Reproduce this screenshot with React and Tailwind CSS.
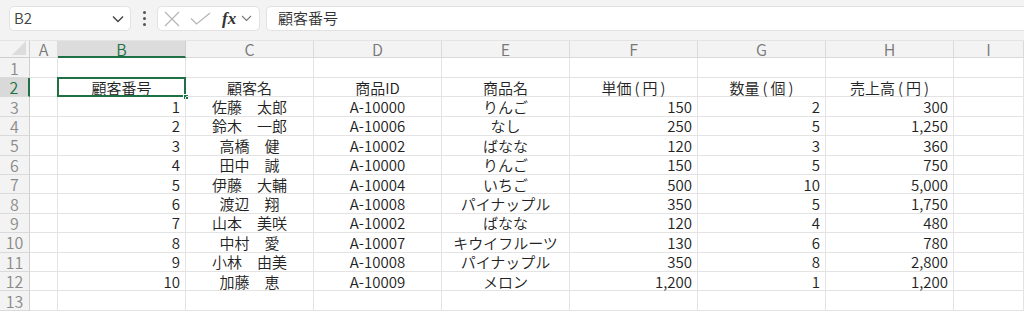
import React from 'react';

const cols = ['A', 'B', 'C', 'D', 'E', 'F', 'G', 'H', 'I'];

const paren = (a, b) => (
  <>
    {a}
    <span className="mx-[3px]">(</span>
    {b}
    <span className="ml-[3px]">)</span>
  </>
);

const header = ['', '顧客番号', '顧客名', '商品ID', '商品名', paren('単価', '円'), paren('数量', '個'), paren('売上高', '円'), ''];

const rows = [
  ['1', '佐藤　太郎', 'A-10000', 'りんご', '150', '2', '300'],
  ['2', '鈴木　一郎', 'A-10006', 'なし', '250', '5', '1,250'],
  ['3', '高橋　健', 'A-10002', 'ばなな', '120', '3', '360'],
  ['4', '田中　誠', 'A-10000', 'りんご', '150', '5', '750'],
  ['5', '伊藤　大輔', 'A-10004', 'いちご', '500', '10', '5,000'],
  ['6', '渡辺　翔', 'A-10008', 'パイナップル', '350', '5', '1,750'],
  ['7', '山本　美咲', 'A-10002', 'ばなな', '120', '4', '480'],
  ['8', '中村　愛', 'A-10007', 'キウイフルーツ', '130', '6', '780'],
  ['9', '小林　由美', 'A-10008', 'パイナップル', '350', '8', '2,800'],
  ['10', '加藤　恵', 'A-10009', 'メロン', '1,200', '1', '1,200'],
];

// which data columns are numbers (right aligned)
const numeric = [true, false, false, false, true, true, true];

const widths = ['w-[28px]', 'w-[128px]', 'w-[128px]', 'w-[128px]', 'w-[128px]', 'w-[128px]', 'w-[128px]', 'w-[128px]', 'flex-1'];

function Cell({ i, children, align = 'center', selected }) {
  return (
    <div
      className={`${widths[i]} shrink-0 h-full border-r border-b border-[#e3e3e3] flex items-center px-[5px] relative ${
        align === 'right' ? 'justify-end' : 'justify-center'
      }`}
    >
      <span className="whitespace-nowrap leading-none">{children}</span>
      {selected && (
        <>
          <div className="absolute -left-px -top-px -right-px -bottom-px border-2 border-[#1f7145]" />
          <div className="absolute -right-[4px] -bottom-[4px] w-[6px] h-[6px] bg-[#1f7145] border border-white" />
        </>
      )}
    </div>
  );
}

function RowHead({ n, active }) {
  return (
    <div
      className={`w-[30px] shrink-0 h-full flex items-center justify-center border-b border-[#dadada] text-[16px] leading-none ${
        active ? 'bg-[#d9d9d9] text-[#1f7145] border-r-2 border-r-[#1f7145]' : 'bg-[#f3f3f3] text-[#8a8a8a] border-r border-r-[#cfcfcf]'
      }`}
    >
      {n}
    </div>
  );
}

export default function App() {
  return (
    <div className="w-[1024px] h-[312px] overflow-hidden bg-white text-[15px] text-[#222] font-[350] font-['Noto_Sans_CJK_JP',sans-serif]">
      {/* formula bar */}
      <div className="h-[40px] bg-[#f3f3f3] flex items-start pt-[6px] pl-[9px]">
        <div className="w-[122px] h-[25px] bg-white rounded-[5px] border border-[#e2e2e2] flex items-center justify-between pl-[4px] pr-[6px] text-[#444]">
          <span className="text-[15px]">B2</span>
          <svg width="12" height="8" viewBox="0 0 12 8" fill="none" stroke="#444" strokeWidth="1.4">
            <path d="M1 1.5 L6 6.5 L11 1.5" />
          </svg>
        </div>
        <div className="w-[26px] h-[25px] flex flex-col items-center justify-center gap-[3px]">
          <span className="w-[3px] h-[3px] rounded-full bg-[#555]" />
          <span className="w-[3px] h-[3px] rounded-full bg-[#555]" />
          <span className="w-[3px] h-[3px] rounded-full bg-[#555]" />
        </div>
        <div className="w-[103px] h-[25px] bg-white rounded-[5px] border border-[#e2e2e2] flex items-center pl-[6px]">
          <svg width="16" height="16" viewBox="0 0 16 16" stroke="#b5b5b5" strokeWidth="1.2">
            <path d="M1 1 L15 15 M15 1 L1 15" />
          </svg>
          <svg width="21" height="13" viewBox="0 0 21 13" fill="none" stroke="#b5b5b5" strokeWidth="1.2" className="ml-[10px]">
            <path d="M1 6.5 L6.5 12 L20 1" />
          </svg>
          <span className="ml-[11px] font-['Liberation_Serif',serif] italic font-bold text-[17px] text-[#333] leading-none">fx</span>
          <svg width="11" height="7" viewBox="0 0 11 7" fill="none" stroke="#777" strokeWidth="1.1" className="ml-[5px]">
            <path d="M1 1 L5.5 5.5 L10 1" />
          </svg>
        </div>
        <div className="ml-[6px] flex-1 h-[25px] bg-white rounded-l-[5px] border border-r-0 border-[#e2e2e2] flex items-center pl-[11px] text-[15px] text-[#333]">
          顧客番号
        </div>
      </div>

      {/* column headers */}
      <div className="h-[18px] flex bg-[#f3f3f3] text-[#777] text-[16px] border-t border-[#e4e4e4]">
        <div className="w-[30px] shrink-0 h-full border-r border-b border-[#cfcfcf] relative">
          <svg width="14" height="14" viewBox="0 0 14 14" className="absolute right-[3px] bottom-[2px]">
            <path d="M14 0 L14 14 L0 14 Z" fill="#dcdcdc" />
          </svg>
        </div>
        {cols.map((c, i) => (
          <div
            key={c}
            className={`${widths[i]} shrink-0 h-full flex items-center justify-center leading-none ${
              c === 'B'
                ? 'bg-[#dcdcdc] text-[#1f7145] border-b-2 border-b-[#1f7145] border-r border-r-[#cfcfcf]'
                : 'border-r border-b border-[#dadada]'
            }`}
          >
            {c}
          </div>
        ))}
      </div>

      {/* row 1 */}
      <div className="h-[20px] flex">
        <RowHead n="1" />
        {cols.map((c, i) => (
          <Cell key={c} i={i} />
        ))}
      </div>

      {/* row 2: header texts */}
      <div className="h-[19.4px] flex">
        <RowHead n="2" active />
        {header.map((h, i) => (
          <Cell key={i} i={i} selected={i === 1}>
            {h}
          </Cell>
        ))}
      </div>

      {rows.map((r, ri) => (
        <div key={ri} className="h-[19.4px] flex">
          <RowHead n={ri + 3} />
          <Cell i={0} />
          {r.map((v, ci) => (
            <Cell key={ci} i={ci + 1} align={numeric[ci] ? 'right' : 'center'}>
              {v}
            </Cell>
          ))}
          <Cell i={8} />
        </div>
      ))}

      <div className="h-[20px] flex">
        <RowHead n="13" />
        {cols.map((c, i) => (
          <Cell key={c} i={i} />
        ))}
      </div>
    </div>
  );
}
